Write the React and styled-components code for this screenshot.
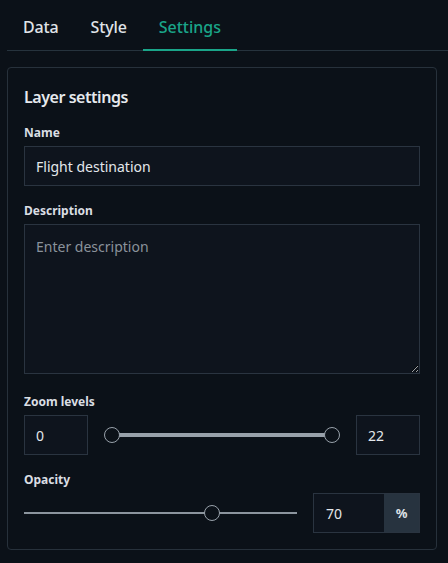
import React, { useState } from "react";
import styled, { createGlobalStyle } from "styled-components";

const GlobalStyle = createGlobalStyle`
  html, body {
    margin: 0;
    padding: 0;
    background: #0b1118;
  }
  body {
    font-family: "Noto Sans", "Open Sans", sans-serif;
    color: #e3e7eb;
  }
`;

function Slider({ min, max, values, thick }) {
  const pct = (v) => ((v - min) / (max - min)) * 100;
  const range = values.length > 1;
  return (
    <SliderWrap>
      <Rail $thick={thick} />
      {range && (
        <Fill
          style={{
            left: `calc(8px + (100% - 16px) * ${pct(values[0]) / 100})`,
            right: `calc(8px + (100% - 16px) * ${1 - pct(values[1]) / 100})`,
          }}
        />
      )}
      {values.map((v, i) => (
        <Thumb
          key={i}
          style={{ left: `calc((100% - 16px) * ${pct(v) / 100})` }}
        />
      ))}
    </SliderWrap>
  );
}

export default function App() {
  const [tab, setTab] = useState("Settings");
  const [name, setName] = useState("Flight destination");
  const [desc, setDesc] = useState("");

  return (
    <>
      <GlobalStyle />
      <Page>
        <TabList>
          {["Data", "Style", "Settings"].map((t) => (
            <Tab key={t} $active={tab === t} onClick={() => setTab(t)}>
              {t}
            </Tab>
          ))}
        </TabList>

        <Panel>
          <Title>Layer settings</Title>

          <Field>
            <Label>Name</Label>
            <Input value={name} onChange={(e) => setName(e.target.value)} />
          </Field>

          <Field $gap={17}>
            <Label>Description</Label>
            <TextArea
              placeholder="Enter description"
              value={desc}
              onChange={(e) => setDesc(e.target.value)}
            />
          </Field>

          <Field $gap={20}>
            <Label>Zoom levels</Label>
            <Row>
              <SmallInput defaultValue="0" />
              <Slider min={0} max={22} values={[0, 22]} thick />
              <SmallInput defaultValue="22" />
            </Row>
          </Field>

          <Field $gap={17}>
            <Label>Opacity</Label>
            <Row>
              <Slider min={0} max={100} values={[70]} />
              <Group>
                <GroupInput defaultValue="70" />
                <Addon>%</Addon>
              </Group>
            </Row>
          </Field>
        </Panel>
      </Page>
    </>
  );
}

const Page = styled.div`
  padding-left: 7px;
`;

const TabList = styled.div`
  display: flex;
  border-bottom: 1px solid #26333d;
  height: 50px;
`;

const Tab = styled.button`
  background: none;
  border: none;
  border-bottom: 2px solid ${(p) => (p.$active ? "#1aa589" : "transparent")};
  padding: 17px 16px 12px;
  height: 51px;
  font-family: inherit;
  font-size: 16px;
  line-height: 20px;
  font-weight: 500;
  letter-spacing: ${(p) => (p.$active ? "0" : "-0.15px")};
  color: ${(p) => (p.$active ? "#1aa589" : "#e0e4e8")};
  cursor: pointer;
`;

const Panel = styled.div`
  margin: 16px 11px 0 0;
  border: 1px solid #27313b;
  border-radius: 4px;
  padding: 17px 16px 16px;
  display: flex;
  flex-direction: column;
`;

const Title = styled.h2`
  margin: 0;
  font-size: 16px;
  line-height: 24px;
  font-weight: 600;
  letter-spacing: -0.45px;
  color: #e6e9ed;
`;

const Field = styled.div`
  display: flex;
  flex-direction: column;
  margin-top: ${(p) => p.$gap ?? 16}px;
`;

const Label = styled.label`
  font-size: 12px;
  line-height: 16px;
  font-weight: 700;
  color: #dadee3;
  margin-bottom: 5px;
`;

const inputBase = `
  box-sizing: border-box;
  height: 40px;
  background: #0e141d;
  border: 1px solid #2a3440;
  border-radius: 0;
  padding: 0 11px;
  font-family: "Noto Sans", "Open Sans", sans-serif;
  font-size: 14px;
  color: #e3e7eb;
  outline: none;
`;

const Input = styled.input`
  ${inputBase}
  width: 100%;
`;

const TextArea = styled.textarea`
  ${inputBase}
  display: block;
  width: 100%;
  height: 150px;
  padding: 12px 11px;
  line-height: 20px;
  resize: vertical;
  color-scheme: dark;
  &::placeholder {
    color: #8a929b;
  }
`;

const Row = styled.div`
  display: flex;
  align-items: center;
  gap: 16px;
`;

const SmallInput = styled.input`
  ${inputBase}
  width: 64px;
  flex: none;
`;

const SliderWrap = styled.div`
  position: relative;
  flex: 1;
  height: 40px;
  display: flex;
  align-items: center;
`;

const Rail = styled.div`
  width: 100%;
  height: ${(p) => (p.$thick ? 4 : 2)}px;
  background: ${(p) => (p.$thick ? "transparent" : "#8c959e")};
`;

const Fill = styled.div`
  position: absolute;
  top: 18px;
  height: 4px;
  background: #98a1aa;
`;

const Thumb = styled.div`
  position: absolute;
  top: 12px;
  box-sizing: border-box;
  width: 16px;
  height: 16px;
  border-radius: 50%;
  border: 1.5px solid #98a1aa;
  background: #0b1118;
`;

const Group = styled.div`
  display: flex;
  flex: none;
  width: 107px;
  height: 40px;
  box-sizing: border-box;
  border: 1px solid #2a3440;
`;

const GroupInput = styled.input`
  ${inputBase}
  border: none;
  height: 38px;
  width: 70px;
  padding-left: 12px;
`;

const Addon = styled.span`
  flex: 1;
  display: flex;
  align-items: center;
  justify-content: center;
  background: #27333f;
  font-size: 13px;
  font-weight: 700;
  color: #dde1e6;
`;
